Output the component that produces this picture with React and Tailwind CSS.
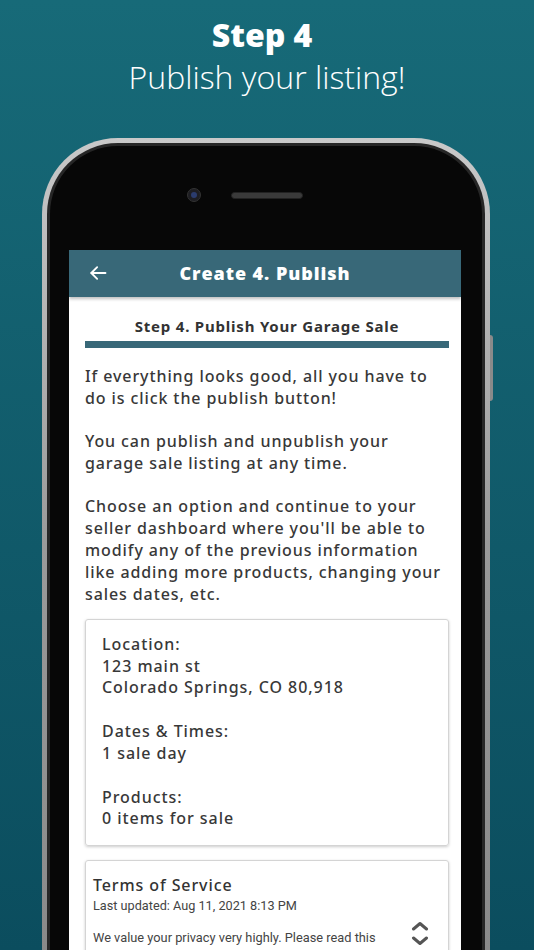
import React from 'react'

function Chevrons() {
  return (
    <div className="absolute right-[19px] top-[60px] flex flex-col items-center gap-[5px] text-[#555]">
      <svg width="18" height="10" viewBox="0 0 18 10" fill="none" stroke="currentColor" strokeWidth="3" strokeLinecap="round" strokeLinejoin="round">
        <path d="M2.5 8 L9 2.5 L15.5 8" />
      </svg>
      <svg width="18" height="10" viewBox="0 0 18 10" fill="none" stroke="currentColor" strokeWidth="3" strokeLinecap="round" strokeLinejoin="round">
        <path d="M2.5 2 L9 7.5 L15.5 2" />
      </svg>
    </div>
  )
}

function Screen() {
  const body = { fontFamily: '"Noto Sans", "Open Sans", sans-serif' }
  const roboto = { fontFamily: 'Roboto, sans-serif' }
  return (
    <div className="bg-white h-[700px] overflow-hidden">
      {/* App bar */}
      <div className="relative h-[47px] bg-[#386878] flex items-center justify-center shadow-[0_2px_3px_rgba(0,0,0,0.25)]">
        <svg className="absolute left-[19px] top-[13px]" width="20" height="20" viewBox="0 0 24 24" fill="none" stroke="white" strokeWidth="2.2" strokeLinecap="round" strokeLinejoin="round">
          <path d="M21 12H4" />
          <path d="M11 5l-7 7 7 7" />
        </svg>
        <span className="text-white text-[18px] font-extrabold tracking-[0.95px]" style={{ fontFamily: '"Open Sans", sans-serif' }}>
          Create 4. Publish
        </span>
      </div>

      <div className="pl-4 pr-3 pt-[19px]" style={body}>
        <h2 className="text-center text-[15px] font-bold text-[#333] leading-[20px] tracking-[0.8px]">
          Step 4. Publish Your Garage Sale
        </h2>
        <div className="h-[7px] bg-[#386878] mt-[5px]" />

        <div className="mt-[17px] text-[16px] leading-[22px] text-[#383838] font-medium tracking-[0.9px] space-y-[21px] whitespace-nowrap">
          <p>
            If everything looks good, all you have to
            <br />
            do is click the publish button!
          </p>
          <p>
            You can publish and unpublish your
            <br />
            garage sale listing at any time.
          </p>
          <p>
            Choose an option and continue to your
            <br />
            seller dashboard where you'll be able to
            <br />
            modify any of the previous information
            <br />
            like adding more products, changing your
            <br />
            sales dates, etc.
          </p>
        </div>

        {/* Summary card */}
        <div className="mt-[14px] border border-[#d4d4d4] rounded-[3px] shadow-[0_1px_3px_rgba(0,0,0,0.2)] pl-4 pt-[14px] pb-[15px] text-[16px] leading-[21.7px] text-[#383838] font-medium tracking-[0.95px]">
          <p>Location:</p>
          <p>123 main st</p>
          <p>Colorado Springs, CO 80,918</p>
          <p className="mt-[22px]">Dates &amp; Times:</p>
          <p>1 sale day</p>
          <p className="mt-[22px]">Products:</p>
          <p>0 items for sale</p>
        </div>

        {/* Terms card */}
        <div className="relative mt-[14px] border border-[#d4d4d4] rounded-[3px] shadow-[0_1px_3px_rgba(0,0,0,0.2)] pl-[7px] pt-[13px] h-[120px]">
          <p className="text-[16px] leading-[22px] text-[#333] font-medium tracking-[0.9px]">Terms of Service</p>
          <p className="mt-[1px] text-[12.7px] leading-[18px] text-[#444]" style={roboto}>
            Last updated: Aug 11, 2021 8:13 PM
          </p>
          <p className="mt-[14px] text-[12.8px] leading-[18px] text-[#444]" style={roboto}>
            We value your privacy very highly. Please read this
          </p>
          <Chevrons />
        </div>
      </div>
    </div>
  )
}

function Phone() {
  return (
    <div className="relative ml-[42px] w-[448px]">
      {/* side button */}
      <div className="absolute right-[-3px] top-[197px] w-[3px] h-[66px] rounded-r bg-[#8a8a8a]" />
      <div className="rounded-t-[76px] bg-gradient-to-b from-[#c9c9c9] via-[#9a9a9a] to-[#8a8a8a] p-[5px] pb-0">
        <div className="rounded-t-[71px] bg-[#262626] p-[3px] pb-0">
          <div className="rounded-t-[68px] bg-[#070707] pl-[19px] pr-[21px]">
            {/* camera + speaker */}
            <div className="h-[104px] flex items-start pt-[42px] pl-[118px] gap-[30px]">
              <div className="w-[14px] h-[14px] rounded-full bg-[#1d1d22] border border-[#333] flex items-center justify-center">
                <div className="w-[6px] h-[6px] rounded-full bg-[#2b3c6e]" />
              </div>
              <div className="mt-[4px] w-[72px] h-[7px] rounded-full bg-[#3a3a3a] border border-[#222]" />
            </div>
            <Screen />
          </div>
        </div>
      </div>
    </div>
  )
}

export default function App() {
  return (
    <div className="w-[534px] h-[950px] overflow-hidden bg-gradient-to-b from-[#176a78] to-[#0b4d5e]">
      <div className="pt-[14px] text-center text-white" style={{ fontFamily: '"Open Sans", sans-serif' }}>
        <h1 className="text-[32px] leading-[42px] font-extrabold pr-[10px]">Step 4</h1>
        <p className="text-[32px] leading-[42px] font-light">Publish your listing!</p>
      </div>
      <div className="mt-[40px]">
        <Phone />
      </div>
    </div>
  )
}
